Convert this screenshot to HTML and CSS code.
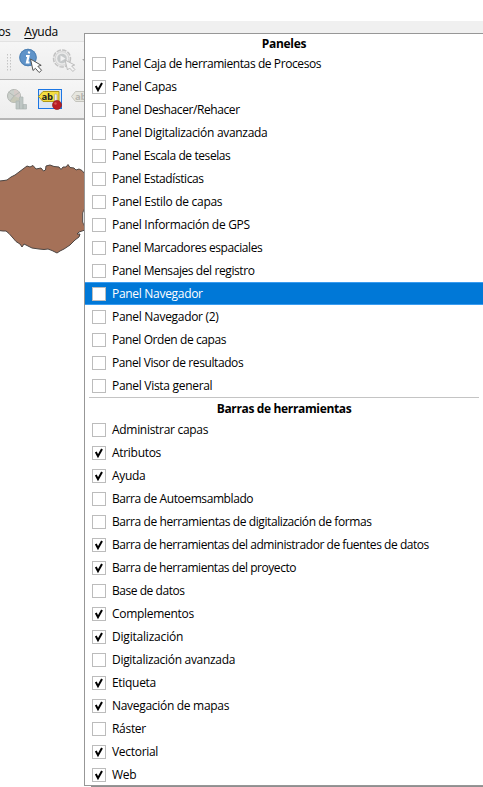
FILE: index.html
```
<!DOCTYPE html>
<html lang="es">
<head>
<meta charset="utf-8">
<title>QGIS</title>
<link rel="stylesheet" href="styles.css">
</head>
<body>
<div class="menubar"><span>os</span><span><u>A</u>yuda</span></div>
<div class="toolbar first">
  <svg width="84" height="38" viewBox="0 0 84 38">
    <path d="M7.500 12V30M10.500 12V30" stroke="#c4c4c4" stroke-dasharray="1.500 1.500"/>
    <circle cx="28" cy="15.500" r="8.700" fill="#5f93c9"/><circle cx="28" cy="15.500" r="8.200" fill="none" stroke="#4e80b2"/>
    <path d="M29.200 9.500l-.4 2M26 14h2.500l-1.500 6.500h2.500" fill="none" stroke="#fff" stroke-width="2.200"/>
    <path d="M30.500 17l2.500 11.500 2.400-2.200 3.700 4.200 2.500-2.200-3.700-4 3.300-1z" fill="#fff" stroke="#555"/>
    <circle cx="62" cy="16.500" r="8.500" fill="#ededed" stroke="#c2c2c2" stroke-width="1.500" stroke-dasharray="4.500 1.200"/>
    <circle cx="62" cy="16.500" r="6.800" fill="#ebebeb" stroke="#d4d4d4"/><circle cx="62" cy="16.500" r="4.800" fill="#c6c9ca"/>
    <path d="M60.500 13.500v6l5-3z" fill="#f1f1f1"/>
    <path d="M65 18l2.500 10 2-2 3.400 3.500 2-2-3.200-3.500 3-1z" fill="#f3f3f3" stroke="#bdbdbd"/>
    <path d="M82 17h4l-2 2z" fill="#aaa"/>
  </svg>
</div>
<div class="toolbar second">
  <svg width="84" height="38" viewBox="0 0 84 38">
    <circle cx="14" cy="16" r="6.500" fill="#cbd0cb" stroke="#b2b6b2"/>
    <path d="M14 16V9.500A6.500 6.500 0 0 1 20 18z" fill="#d4cbc8"/><path d="M14 16l6 2.500a6.500 6.500 0 0 1-10 2.500z" fill="#c7c8b8"/>
    <path d="M8.500 12l5.500 4-4 5M14 16l6-4" fill="none" stroke="#b5bab5"/>
    <path d="M16 21h3.500v8H16zM19.500 17h3.500v12h-3.500zM23 24.500h3.500V29H23z" fill="#bec6c4" stroke="#adb5b3" stroke-width=".7"/>
    <rect x="38.500" y="9.500" width="23" height="19" fill="#dce6f2" stroke="#1b76e4"/>
    <path d="M38.500 16.500l4.500-5h16v10H43z" fill="#f6df42" stroke="#ae9717"/>
    <text class="label-icon" x="41.500" y="19.500">ab</text>
    <rect x="54.500" y="14" width="2.500" height="9" rx="1" fill="#eee" stroke="#999" stroke-width=".6"/>
    <circle cx="57" cy="25" r="4.500" fill="#b91f24" stroke="#8e1d20" stroke-width=".7"/><circle cx="55.500" cy="23.500" r="1.200" fill="#d65757"/>
    <path d="M71.500 16.500l4-5H86v10H75.500z" fill="#e6e6df" stroke="#c4c4bd"/>
    <text class="label-icon faded" x="75" y="19.500">ab</text>
  </svg>
</div>
<div class="canvas">
  <svg width="84" height="140" viewBox="0 120 84 140">
    <path d="M-1 181L4 180.500 7 180 11 177 15 175 19 172 23 169 27 166 30 167 33 165.500 36 169 41 168 43.500 171 45.500 170 46 166 50 165 54 166.500 59 167 61 169.500 63 167 66 167 68 164.500 70 167.500 74 168 76 170 79 169 82 170.500 85 174V230L79 232 77 234 80 234 79 237 75 240 70 245 64 249 60 251 57 253 52 250.500 48 249 44 249.500 39 249 32 248 28 246 24 244 22 247 20 244 16 241.500 13 238 9 233.500 6 231 3 231 -1 230.500z" fill="#a57158" stroke="#4c4542"/>
    <path d="M85 208l-2.500 5v9l2 4" fill="#ddd" stroke="#4c4542" stroke-width=".8"/>
  </svg>
</div>
<div class="menu">
  <div class="title">Paneles</div>
  <div class="item tight"><i></i><span>Panel Caja de herramientas de Procesos</span></div>
  <div class="item on"><i></i><span>Panel Capas</span></div>
  <div class="item tight"><i></i><span>Panel Deshacer/Rehacer</span></div>
  <div class="item"><i></i><span>Panel Digitalización avanzada</span></div>
  <div class="item tight"><i></i><span>Panel Escala de teselas</span></div>
  <div class="item tight"><i></i><span>Panel Estadísticas</span></div>
  <div class="item"><i></i><span>Panel Estilo de capas</span></div>
  <div class="item"><i></i><span>Panel Información de GPS</span></div>
  <div class="item tight"><i></i><span>Panel Marcadores espaciales</span></div>
  <div class="item tight"><i></i><span>Panel Mensajes del registro</span></div>
  <div class="item active"><i></i><span>Panel Navegador</span></div>
  <div class="item"><i></i><span>Panel Navegador (2)</span></div>
  <div class="item tight"><i></i><span>Panel Orden de capas</span></div>
  <div class="item tight"><i></i><span>Panel Visor de resultados</span></div>
  <div class="item"><i></i><span>Panel Vista general</span></div>
  <div class="separator"></div>
  <div class="title second">Barras de herramientas</div>
  <div class="item"><i></i><span>Administrar capas</span></div>
  <div class="item on"><i></i><span>Atributos</span></div>
  <div class="item on"><i></i><span>Ayuda</span></div>
  <div class="item tight"><i></i><span>Barra de Autoemsamblado</span></div>
  <div class="item tight"><i></i><span>Barra de herramientas de digitalización de formas</span></div>
  <div class="item on tighter"><i></i><span>Barra de herramientas del administrador de fuentes de datos</span></div>
  <div class="item on tighter"><i></i><span>Barra de herramientas del proyecto</span></div>
  <div class="item tighter"><i></i><span>Base de datos</span></div>
  <div class="item on"><i></i><span>Complementos</span></div>
  <div class="item on loose"><i></i><span>Digitalización</span></div>
  <div class="item"><i></i><span>Digitalización avanzada</span></div>
  <div class="item on"><i></i><span>Etiqueta</span></div>
  <div class="item on"><i></i><span>Navegación de mapas</span></div>
  <div class="item"><i></i><span>Ráster</span></div>
  <div class="item on"><i></i><span>Vectorial</span></div>
  <div class="item on"><i></i><span>Web</span></div>
</div>
<div class="menu-shadow"></div>
<script src="menu.js"></script>
</body>
</html>
```
FILE: menu.js
```
document.querySelectorAll('.item.on i').forEach(function (box) {
  box.innerHTML = '<svg width="12" height="12" viewBox="0 0 12 12"><path d="M2.800 5L5 9.200L9 2" fill="none" stroke="#000" stroke-width="2"/></svg>';
});
```
FILE: styles.css
```
* { box-sizing: border-box; }
body {
  margin: 0;
  padding-top: 21px;
  height: 787px;
  overflow: hidden;
  background: #fff;
  color: #000;
  font: 12px/18px "Open Sans", "Noto Sans", sans-serif;
  letter-spacing: -0.3px;
}
svg { display: block; }
.menubar {
  height: 20px;
  display: flex;
  gap: 14px;
  background: #f0f0f0;
  line-height: 21px;
}
.menubar span:first-child { margin-left: -2px; }
.menubar u { text-underline-offset: 2px; }
.toolbar { background: linear-gradient(#f6f6f6, #ededed); }
.toolbar.first {
  height: 39px;
  border-top: 1px solid #e2e2e2;
  border-bottom: 1px solid #b9b9b9;
}
.toolbar.second { height: 40px; border-bottom: 2px solid #b5b5b5; }
.label-icon { font: bold 9.500px "Open Sans", sans-serif; fill: #222; }
.label-icon.faded { fill: #b5b5b0; }
.menu {
  position: absolute;
  left: 84px;
  top: 33px;
  width: 399px;
  height: 753px;
  overflow: hidden;
  background: #fff;
  border: 1px solid #979797;
  border-right: 0;
}
.title { height: 18px; line-height: 19px; text-align: center; font-weight: bold; }
.title.second { height: 20px; line-height: 22px; letter-spacing: -0.35px; }
.separator { height: 1px; margin: 0 4px; background: #c4c4c4; }
.item {
  height: 23px;
  display: flex;
  align-items: center;
  gap: 6px;
  padding-left: 7px;
  white-space: nowrap;
}
.item span { padding-top: 1px; }
.item.tight { letter-spacing: -0.41px; }
.item.tighter { letter-spacing: -0.455px; }
.item.loose { letter-spacing: -0.2px; }
.item i {
  width: 14px;
  height: 14px;
  border: 1px solid #bcbcbc;
  background: #fff;
  flex: none;
}
.item.active {
  background: #0078d7;
  border: solid #3a9cf0;
  border-width: 1px 0;
  color: #fff;
}
.menu-shadow {
  position: absolute;
  left: 91px;
  top: 786px;
  width: 392px;
  height: 1px;
  background: #8f8f8f;
}
```
